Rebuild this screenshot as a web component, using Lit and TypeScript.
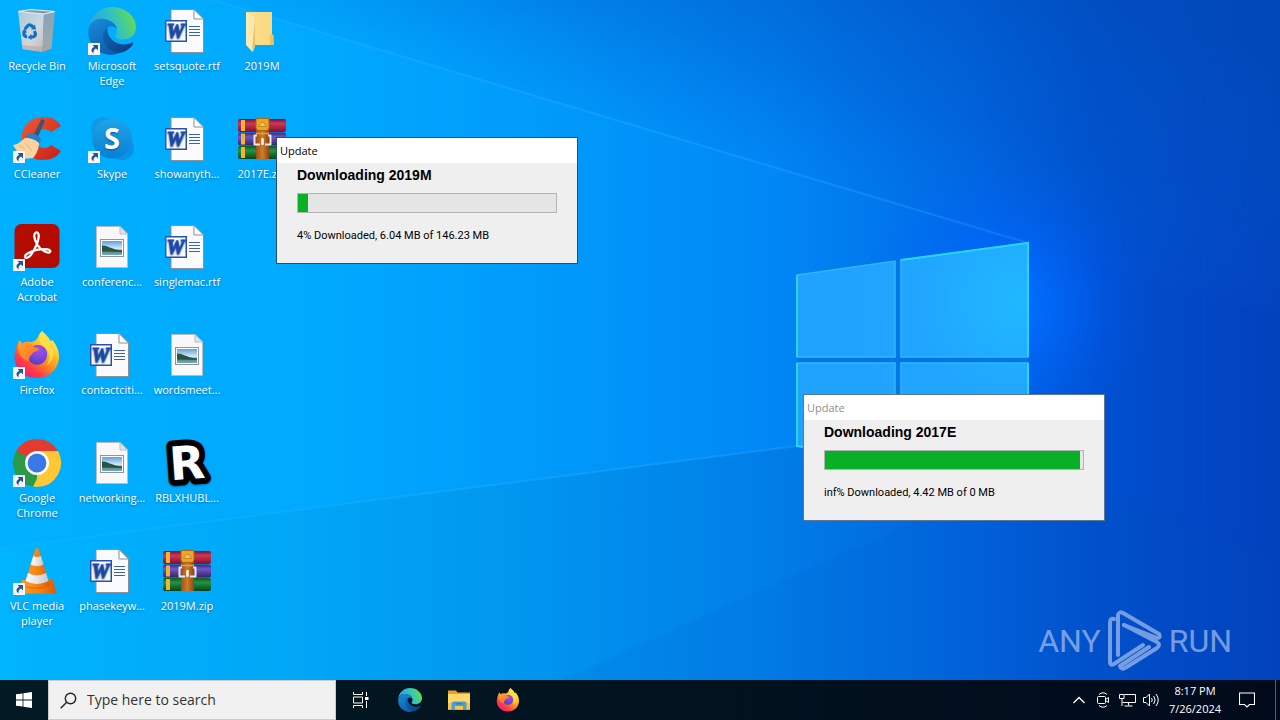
import { LitElement, html, svg, css, nothing } from "lit";
import { customElement, property } from "lit/decorators.js";

type IconName =
  | "bin" | "edge" | "word" | "folder" | "ccleaner" | "skype" | "rar" | "acrobat"
  | "image" | "firefox" | "chrome" | "blox" | "vlc" | "explorer";

interface DesktopItem {
  label: string;
  icon: IconName;
  shortcut?: boolean;
}

const items: DesktopItem[] = [
  { label: "Recycle Bin", icon: "bin" },
  { label: "CCleaner", icon: "ccleaner", shortcut: true },
  { label: "Adobe Acrobat", icon: "acrobat", shortcut: true },
  { label: "Firefox", icon: "firefox", shortcut: true },
  { label: "Google Chrome", icon: "chrome", shortcut: true },
  { label: "VLC media player", icon: "vlc", shortcut: true },
  { label: "Microsoft Edge", icon: "edge", shortcut: true },
  { label: "Skype", icon: "skype", shortcut: true },
  { label: "conferenc...", icon: "image" },
  { label: "contactciti...", icon: "word" },
  { label: "networking...", icon: "image" },
  { label: "phasekeyw...", icon: "word" },
  { label: "setsquote.rtf", icon: "word" },
  { label: "showanyth...", icon: "word" },
  { label: "singlemac.rtf", icon: "word" },
  { label: "wordsmeet...", icon: "image" },
  { label: "RBLXHUBL...", icon: "blox" },
  { label: "2019M.zip", icon: "rar" },
  { label: "2019M", icon: "folder" },
  { label: "2017E.zip", icon: "rar" },
];

const glyphs = {
  bin: svg`
    <defs>
      <linearGradient id="bin-l" x1="0" y1="0" x2="1" y2="1"><stop offset="0" stop-color="#a9c8da"/><stop offset=".6" stop-color="#cfd8de"/><stop offset="1" stop-color="#c4b8b0"/></linearGradient>
      <linearGradient id="bin-r" x1="0" y1="0" x2="0" y2="1"><stop offset="0" stop-color="#86a5b9"/><stop offset="1" stop-color="#a3a9ae"/></linearGradient>
    </defs>
    <path d="M5 4.500 L31 6.500 L29.500 45 L9.500 42 Z" fill="url(#bin-l)"/>
    <path d="M31 6.500 L42 4.500 L38.500 41.500 L29.500 45 Z" fill="url(#bin-r)"/>
    <path d="M5 4.500 L18 2.500 L42 4.500 L31 7 Z" fill="#7f9aab" stroke="#e6eff4" stroke-width="1.200"/>
    <path d="M9 38 L29.800 40 L38.800 37 L38.500 41.500 L29.500 45 L9.500 42 Z" fill="#b89f94" opacity=".5"/>
    <g fill="none" stroke="#1273c4" stroke-width="3.200">
      <path d="M12 22 L15 18.500 Q17 17 19 19 L20.500 21"/>
      <path d="M21.500 24 L22.500 27 Q22 30 19 30 L17 30"/>
      <path d="M14 30 Q10.500 29 11 26 L11.500 24"/>
    </g>
    <path d="M18 22.500 L23 22.500 L22 17.500 Z M18.500 27 L14.500 30.500 L18.500 33 Z M9 25.500 L14 25.500 L11.500 21 Z" fill="#1273c4"/>`,
  edge: svg`
    <defs>
      <linearGradient id="ed-a" x1="0" y1=".6" x2="1" y2=".3"><stop offset="0" stop-color="#2e9fe0"/><stop offset=".5" stop-color="#2fc0c8"/><stop offset="1" stop-color="#69dd49"/></linearGradient>
      <linearGradient id="ed-b" x1="0" y1="0" x2=".6" y2="1"><stop offset="0" stop-color="#178ddb"/><stop offset="1" stop-color="#0d5cad"/></linearGradient>
      <linearGradient id="ed-c" x1="0" y1="0" x2="1" y2=".6"><stop offset="0" stop-color="#1464b4"/><stop offset="1" stop-color="#0b4184"/></linearGradient>
    </defs>
    <path d="M0.500 21 C2 9 12 0 24 0 C38 0 48 10 48 20 C48 28 42 32.500 35 32.500 C30 32.500 27 31 27 29.500 C27 28 29 27.500 29 23.500 C29 17 21 12 13.500 12 C7 12 2.500 15.500 .5 21 Z" fill="url(#ed-a)"/>
    <path d="M.3 25 C.3 16 7 11.800 13.500 11.800 C22 11.800 28 17 29 22 C27 19.500 23.500 18.500 20.500 20 C15 23 15 31 19 37 C24 43 31 44 37 41.500 C32.500 46.500 27 48 21.500 47.800 C9 47 .3 37 .3 25 Z" fill="url(#ed-b)"/>
    <path d="M19.500 20.500 C14.500 24 13.500 31 17.500 38 C22 45 31 48.500 38.500 43.500 C42 41.500 44.500 38.500 45.300 36.500 C45.500 35.500 44.700 35.200 44 35.600 C38.500 38.500 30.500 38 25.500 34 C20.500 30 19 25 19.500 20.500 Z" fill="url(#ed-c)"/>`,
  word: svg`
    <path d="M8 2.500 H31 L40.500 12 V45.500 H8 Z" fill="#fbfbfd" stroke="#8d8f9a"/>
    <path d="M31 2.500 V12 H40.500 Z" fill="#fff" stroke="#8d8f9a"/>
    <path d="M26 19.500 H37 M26 22.500 H37 M26 25.500 H37 M26 28.500 H37" stroke="#3764b4" stroke-width="1.200"/>
    <rect x="2" y="13" width="22" height="22" fill="#2454b0"/>
    <rect x="3.500" y="14.500" width="19" height="19" fill="#fafbff"/>
    <text x="12.500" y="31" text-anchor="middle" font-family="Liberation Serif, serif" font-weight="700" font-style="italic" font-size="20" fill="#1f4fac" stroke="#1f4fac">W</text>`,
  image: svg`
    <defs><linearGradient id="im-s" x1="0" y1="0" x2="0" y2="1"><stop offset="0" stop-color="#5f9fe0"/><stop offset=".55" stop-color="#d6ebf5"/><stop offset=".7" stop-color="#4d8189"/><stop offset="1" stop-color="#7ba9c2"/></linearGradient></defs>
    <path d="M8.500 3.500 H32 L39.500 11 V44.500 H8.500 Z" fill="#f8f8f9" stroke="#b6bcc2"/>
    <path d="M32 3.500 V11 H39.500 Z" fill="#dde6ed" stroke="#b6bcc2"/>
    <rect x="12.500" y="16.500" width="23" height="17" fill="#fff" stroke="#8b96a1"/>
    <rect x="14" y="18" width="20" height="14" fill="url(#im-s)"/>
    <path d="M14 22.500 C19 22 22 26 34 27.500 V29 L14 28.500 Z" fill="#295540"/>`,
  folder: svg`
    <defs><linearGradient id="fo-a" x1="0" y1="0" x2="1" y2="0"><stop offset="0" stop-color="#f7df93"/><stop offset="1" stop-color="#fbd97c"/></linearGradient></defs>
    <path d="M8 5 H34 V27 L35.500 29 V38 H14 Z" fill="url(#fo-a)"/>
    <path d="M34 27 L35.500 29 V38 H32 V29 Z" fill="#ebc463"/>
    <path d="M8 5 L17 10.500 V39.500 L14.500 45 L8 38 Z" fill="#fce9ad"/>
    <path d="M17 10.500 V39.500 L14.500 45 V38 Z" fill="#e6c46c"/>`,
  ccleaner: svg`
    <defs><linearGradient id="cc-a" x1="0" y1="0" x2="1" y2="1"><stop offset="0" stop-color="#f05a38"/><stop offset="1" stop-color="#c71f16"/></linearGradient></defs>
    <path d="M48 11 C44 4 37 1.500 29 2 C16 3 8 12 9 25 C10 38 19 45.500 30 45 C38 45 44 42 48 36 L38 30 C35 33.500 29 34 26 31 C22 27 22 19 26 16 C30 13 35 14 38 17 Z" fill="url(#cc-a)"/>
    <path d="M28.500 4 L32 5.500 L24 24 L20 21 Z" fill="#3a5574"/>
    <path d="M14 20 C18 17 25 19 28 24 L26 29 C21 26 17 24.500 12 24.500 Z" fill="#2f7fc0"/>
    <path d="M0 30 C6 29 8 26 12 23 C18 23 23 25 26 28 C26 34 23 40 20 43 L9 44 Z" fill="#f9d3a0"/>
    <path d="M6 30 L12 34 M12 28 L19 36" stroke="#e6b176" stroke-width="1"/>`,
  skype: svg`
    <defs><linearGradient id="sk-a" x1="0" y1="0" x2="0" y2="1"><stop offset="0" stop-color="#1ea4e8"/><stop offset="1" stop-color="#0a7fd4"/></linearGradient></defs>
    <circle cx="15" cy="14" r="12" fill="#1098e6"/><circle cx="34" cy="33" r="12" fill="#0b90e8"/>
    <circle cx="24" cy="23.500" r="20" fill="url(#sk-a)"/>
    <text x="24" y="33.500" text-anchor="middle" font-family="Open Sans, sans-serif" font-weight="700" font-size="29" fill="#fff">S</text>`,
  rar: svg`
    <defs>
      <linearGradient id="ra-1" x1="0" y1="0" x2="0" y2="1"><stop offset="0" stop-color="#74152e"/><stop offset=".35" stop-color="#d23552"/><stop offset="1" stop-color="#7a1230"/></linearGradient>
      <linearGradient id="ra-2" x1="0" y1="0" x2="0" y2="1"><stop offset="0" stop-color="#3b277c"/><stop offset=".35" stop-color="#7157c4"/><stop offset="1" stop-color="#33226c"/></linearGradient>
      <linearGradient id="ra-3" x1="0" y1="0" x2="0" y2="1"><stop offset="0" stop-color="#0d5a26"/><stop offset=".35" stop-color="#239444"/><stop offset="1" stop-color="#0a431b"/></linearGradient>
      <linearGradient id="ra-4" x1="0" y1="0" x2="1" y2="0"><stop offset="0" stop-color="#9d5117"/><stop offset=".5" stop-color="#cf7c2a"/><stop offset="1" stop-color="#8d4512"/></linearGradient>
    </defs>
    <rect x="0" y="4" width="48" height="13" rx="2" fill="url(#ra-1)"/>
    <rect x="0" y="17.500" width="48" height="13" rx="2" fill="url(#ra-2)"/>
    <rect x="0" y="31" width="48" height="13" rx="2" fill="url(#ra-3)"/>
    <path d="M3 5 H7 V16 H3 Z M3 18.500 H7 V29.500 H3 Z M3 32 H7 V43 H3 Z" fill="#f0b434"/>
    <rect x="18" y="3" width="13" height="41" fill="url(#ra-4)"/>
    <path d="M18 3.500 H31 V12.500 Q31 15.500 28 15.500 H21 Q18 15.500 18 12.500 Z" fill="#e9a62c" stroke="#a9660f"/>
    <path d="M20.500 11.500 Q24.500 3 28.500 11.500 Z" fill="#f6c64e" stroke="#b9771a" stroke-width=".8"/>
    <path d="M19 20.500 H16.500 V29.500 H22 M30 20.500 H32.500 V29.500 H27" fill="none" stroke="#eceaf0" stroke-width="2" stroke-linejoin="round"/>
    <rect x="23.200" y="23" width="2.600" height="7" rx="1" fill="#f7f3ee"/>
    <path d="M18 18.500 H31" stroke="#e9a62c" stroke-width="1.500"/>`,
  acrobat: svg`
    <rect x="1.500" y="1" width="45" height="44" rx="7" fill="#b30b00"/>
    <path d="M23 9.500 C26 8.500 27 14 23.500 22 C20 30.500 15 36.500 12.500 34.500 C10 32 17.500 28 25 26.700 C33 25.400 38.500 26.500 37 29 C35 31 28 27.500 24.500 22 C20.500 15.500 20.500 10.500 23 9.500 Z" fill="none" stroke="#fff" stroke-width="2.300" stroke-linejoin="round"/>`,
  firefox: svg`
    <defs>
      <linearGradient id="ff-a" x1=".85" y1=".1" x2=".2" y2=".95"><stop offset="0" stop-color="#fff25a"/><stop offset=".28" stop-color="#ffc52e"/><stop offset=".52" stop-color="#ff8a20"/><stop offset=".76" stop-color="#ff4145"/><stop offset="1" stop-color="#ec1a78"/></linearGradient>
      <radialGradient id="ff-b" cx=".6" cy=".25" r=".85"><stop offset="0" stop-color="#a64bf2"/><stop offset=".6" stop-color="#7246d6"/><stop offset="1" stop-color="#4a3cb6"/></radialGradient>
      <linearGradient id="ff-c" x1="0" y1="0" x2="1" y2="1"><stop offset="0" stop-color="#ffa92b"/><stop offset="1" stop-color="#ff6a2c"/></linearGradient>
    </defs>
    <path d="M29 0 C32 3 36 6 37.500 10 C39 10.500 39 9 38.500 8 C43 13 46 19 46 25.500 C46 38 36 47 24 47 C11 47 1.500 38 1.500 26 C1.500 18 5 12 6.500 9 C7.500 10.500 8.500 11.500 9 12.500 C12 10.500 15.500 10.500 18.500 11 C22 10.500 24 8.500 25 6 C26 3 27.500 1.500 29 0 Z" fill="url(#ff-a)"/>
    <path d="M25 14 C31 14 35 19 34 25 C33 31 28 34.500 22.500 33.500 C16.500 32.500 13.500 27.500 15 22 C16 17 20 14 25 14 Z" fill="url(#ff-b)"/>
    <path d="M6.500 9 C8 11.500 9 12 9.500 12.500 C13 10 18 12 21.500 16 L26 17.500 C25.500 20.500 21.500 20.500 20.500 21.500 C19 23.500 15 25.500 16.500 30 C10 30 4 23 5 14 Z" fill="url(#ff-c)"/>
    <path d="M29 0 C31 8 39 11 40 21 C40.500 28 37 33 33 35 C39 27 36 18 30 15 C26 12 25.500 5 29 0 Z" fill="#ffe14a" opacity=".75"/>`,
  chrome: svg`
    <path d="M24 24 L3.200 12 A24 24 0 0 1 44.800 12 Z" fill="#e33b2e"/>
    <path d="M24 24 L44.800 12 A24 24 0 0 1 24 48 Z" fill="#fcc934"/>
    <path d="M24 24 L24 48 A24 24 0 0 1 3.200 12 Z" fill="#2a9a48"/>
    <path d="M24 12 H44.800 A24 24 0 0 1 46 15 L34 24 Z" fill="#fcc934"/>
    <path d="M34.400 30 L24 48 L20 47.600 L27 34 Z" fill="#fcc934"/>
    <path d="M3.200 12 L13.600 30 L20 34 L14 20 Z" fill="#2a9a48"/>
    <circle cx="24" cy="24" r="12" fill="#fff"/><circle cx="24" cy="24" r="9.400" fill="#3b78e7"/>`,
  blox: svg`
    <text x="24" y="40" text-anchor="middle" transform="rotate(-4 24 24)" font-family="DejaVu Sans, sans-serif" font-weight="700" font-size="46" fill="#fff" stroke="#000" stroke-width="12" stroke-linejoin="round" paint-order="stroke">R</text>`,
  vlc: svg`
    <defs><linearGradient id="vl-a" x1="0" y1="0" x2="1" y2="0"><stop offset="0" stop-color="#ff9a24"/><stop offset=".5" stop-color="#f98413"/><stop offset="1" stop-color="#d95c04"/></linearGradient>
    <linearGradient id="vl-b" x1="0" y1="0" x2="1" y2="0"><stop offset="0" stop-color="#fff"/><stop offset="1" stop-color="#c9c9cd"/></linearGradient></defs>
    <path d="M9 33 H40 L43.500 46.500 H7 Z" fill="url(#vl-a)"/>
    <path d="M11 38 C14 43 34 43 37 38 L35 33 H13 Z" fill="#cf5a06" opacity=".7"/>
    <path d="M22.300 2 Q24 0 25.700 2 L36.500 38 C34 41.500 14 41.500 11.500 38 Z" fill="url(#vl-a)"/>
    <path d="M20.200 9 Q24 11 27.800 9 L30.500 17.500 Q24 20.500 17.600 17.500 Z" fill="url(#vl-b)"/>
    <path d="M15 26 Q24 30.500 33 26 L35.500 34 Q24 40 12.500 34 Z" fill="url(#vl-b)"/>`,
  explorer: svg`
    <path d="M2 5 H18 L21 9 H46 V43 H2 Z" fill="#e8a024"/>
    <path d="M2 12 H46 V43 H2 Z" fill="#ffd765"/>
    <path d="M2 30 H46 V43 H2 Z" fill="#fbc540"/>
    <path d="M9 44 V31 Q9 27 13 27 H35 Q39 27 39 31 V44 H32 V36 H16 V44 Z" fill="#4b9ddb"/>
    <path d="M17 30 H31 V33 H17 Z" fill="#2f7fbf"/>`,
};

@customElement("app-icon")
export class AppIcon extends LitElement {
  @property() name: IconName = "word";
  @property({ type: Boolean }) shortcut = false;

  static styles = css`
    :host { display: block; width: 48px; height: 48px; }
    .art { display: block; width: 100%; height: 100%; overflow: visible; }
  `;

  render() {
    return html`<svg class="art" viewBox="0 0 48 48" aria-hidden="true">
      ${glyphs[this.name]}
      ${this.shortcut
        ? svg`<rect x="0" y="36" width="12" height="12" fill="#f5f8fb"/>
          <path d="M4.500 38 H10 V43.500 L8 41.600 Q5 43 5.500 46.500 Q1 43 6.200 39.800 Z" fill="#26549b"/>`
        : nothing}
    </svg>`;
  }
}

@customElement("update-window")
export class UpdateWindow extends LitElement {
  @property() heading = "";
  @property() status = "";
  @property({ type: Number }) value = 0;
  @property({ type: Boolean, reflect: true }) inactive = false;

  static styles = css`
    :host {
      display: block;
      box-sizing: border-box;
      width: 302px;
      border: 1px solid #24506f;
      background: #efefef;
      color: #000;
    }
    :host([inactive]) { border-color: #5c7796; }
    .title {
      background: #fff;
      padding: 0 3px;
      font: 11px/25px "Open Sans", "Noto Sans", sans-serif;
    }
    :host([inactive]) .title { color: #8f8f8f; }
    .body { display: flex; flex-direction: column; padding: 4px 20px 19px; }
    .heading { margin: 0; font: 700 14px/16px "Liberation Sans", Arial, sans-serif; }
    .bar {
      appearance: none;
      display: block;
      box-sizing: border-box;
      width: 100%;
      height: 20px;
      margin: 10px 0 15px;
      border: 1px solid #b3b3b3;
      background: #e5e5e5;
    }
    .bar::-webkit-progress-bar { background: #e5e5e5; }
    .bar::-webkit-progress-value { background: #08b028; }
    .status { margin: 0; font: 11px/16px "Roboto", Arial, sans-serif; }
  `;

  render() {
    return html`
      <div class="title">Update</div>
      <div class="body">
        <h2 class="heading">${this.heading}</h2>
        <progress class="bar" max="100" .value=${this.value} aria-label=${this.heading}></progress>
        <p class="status">${this.status}</p>
      </div>`;
  }
}

@customElement("app-root")
export class AppRoot extends LitElement {
  static styles = css`
    :host {
      display: flex;
      flex-direction: column;
      height: 100vh;
      min-height: 720px;
      font-family: "Open Sans", "Noto Sans", sans-serif;
    }
    .desktop { position: relative; flex: 1; overflow: hidden; background: #0090f4; }
    .wallpaper { position: absolute; inset: 0; width: 100%; height: 100%; }
    .icons {
      position: relative;
      display: grid;
      grid-auto-flow: column;
      grid-template-rows: repeat(6, 108px);
      grid-auto-columns: 74px;
      column-gap: 1px;
    }
    .item {
      display: flex;
      flex-direction: column;
      align-items: center;
      gap: 3px;
      padding: 7px 4px 0;
      border: 0;
      background: none;
      color: #fff;
      font: 11px/15px "Open Sans", "Noto Sans", sans-serif;
      text-shadow: 0 1px 2px rgb(0 40 90 / 0.5);
    }
    .win { position: absolute; }
    .win.first { left: 276px; top: 137px; }
    .win.second { left: 803px; top: 394px; }
    .watermark {
      position: absolute;
      right: 48px;
      bottom: 8px;
      display: flex;
      align-items: center;
      gap: 6px;
      color: #c4d2f2;
      opacity: 0.6;
      font: 32px/62px "Roboto", sans-serif;
    }
    .mark { width: 56px; height: 62px; }
    .taskbar { display: flex; height: 40px; background: linear-gradient(90deg, #021a24, #02131f 50%, #010a1b); color: #fff; }
    .tile {
      display: flex;
      align-items: center;
      justify-content: center;
      width: 49px;
      padding: 0;
      border: 0;
      background: none;
      color: inherit;
    }
    .tile.narrow { width: 24px; }
    .tile.start { width: 48px; }
    .small { width: 24px; height: 24px; }
    .search {
      display: flex;
      align-items: center;
      gap: 10px;
      box-sizing: border-box;
      width: 288px;
      padding: 0 11px;
      border: 1px solid #c9cccd;
      background: #f1f1f1;
      color: #222;
    }
    .query {
      flex: 1;
      min-width: 0;
      padding: 0;
      border: 0;
      outline: 0;
      background: none;
      font: 14px/20px "Open Sans", "Noto Sans", sans-serif;
    }
    .query::placeholder { color: #333; opacity: 1; }
    .apps { display: flex; flex: 1; }
    .tray { display: flex; }
    .clock {
      display: flex;
      flex-direction: column;
      justify-content: center;
      width: 64px;
      font-size: 11px;
      line-height: 18px;
      text-align: center;
    }
    .notify { width: 40px; }
    .peek { width: 5px; margin-left: 8px; padding: 0; border: 0; border-left: 1px solid #56606c; background: none; }
  `;

  private wallpaper() {
    return html`<svg class="wallpaper" viewBox="0 0 1280 680" preserveAspectRatio="xMidYMid slice" aria-hidden="true">
      <defs>
        <linearGradient id="base" x1="0" y1="0" x2="1" y2="0">
          <stop offset="0" stop-color="#00b0ff"/><stop offset=".25" stop-color="#00a9fe"/><stop offset=".45" stop-color="#0098fa"/>
          <stop offset=".6" stop-color="#0088f6"/><stop offset=".76" stop-color="#006ae6"/><stop offset=".86" stop-color="#0050d0"/><stop offset="1" stop-color="#0340bc"/>
        </linearGradient>
        <linearGradient id="shade" gradientUnits="userSpaceOnUse" x1="690" y1="-130" x2="614" y2="124">
          <stop offset="0" stop-color="#004cb8" stop-opacity=".65"/><stop offset=".6" stop-color="#0054c4" stop-opacity=".35"/><stop offset="1" stop-color="#0060d8" stop-opacity=".04"/>
        </linearGradient>
        <linearGradient id="floor" x1="0" y1="0" x2="1" y2="0">
          <stop offset="0" stop-color="#00b8ff" stop-opacity=".5"/><stop offset=".4" stop-color="#0092e4" stop-opacity=".5"/><stop offset=".75" stop-color="#0058cc" stop-opacity=".4"/><stop offset="1" stop-color="#0340bc" stop-opacity=".3"/>
        </linearGradient>
        <radialGradient id="glow"><stop offset="0" stop-color="#0078ff" stop-opacity="1"/><stop offset=".4" stop-color="#0068ff" stop-opacity=".6"/><stop offset=".7" stop-color="#0060ff" stop-opacity=".2"/><stop offset="1" stop-color="#0060ff" stop-opacity="0"/></radialGradient>
        <linearGradient id="ray" gradientUnits="userSpaceOnUse" x1="0" y1="0" x2="1028" y2="0"><stop offset="0" stop-color="#40c0ff" stop-opacity=".1"/><stop offset=".6" stop-color="#30b0ff" stop-opacity=".35"/><stop offset="1" stop-color="#20a0ff" stop-opacity=".35"/></linearGradient>
        <radialGradient id="pane" gradientUnits="userSpaceOnUse" cx="1020" cy="300" r="200"><stop offset="0" stop-color="#20b8ff"/><stop offset=".5" stop-color="#20a6ff"/><stop offset="1" stop-color="#20a2ff"/></radialGradient>
      </defs>
      <rect width="1280" height="680" fill="url(#base)"/>
      <path d="M200 -4 H1280 V318 L1028 243 Z" fill="url(#shade)"/>
      <path d="M0 548 L797 446 L1028 476 L1280 540 V680 H0 Z" fill="url(#floor)"/>
      <ellipse cx="1005" cy="305" rx="150" ry="150" fill="url(#glow)"/>
      <path d="M200 -4 L1028 243" stroke="url(#ray)" stroke-width="2"/>
      <path d="M0 548 L797 446" stroke="url(#ray)" stroke-width="2"/>
      <path d="M560 680 L930 515 L1028 476 L1280 560 V680 Z" fill="#0058c8" opacity=".1"/>
      <path d="M797 275 L1028 243 V476 L797 446 Z" fill="#0078e4"/>
      <g fill="url(#pane)" stroke="#35b4ff" stroke-width="1.500">
        <path d="M797 275 L895 261 V357 H797 Z"/>
        <path d="M901 260 L1028 243 V357 H901 Z"/>
        <path d="M797 363 H895 V459 L797 446 Z"/>
        <path d="M901 363 H1028 V476 L901 460 Z"/>
      </g>
      <path d="M797 357 V275 M797 363 V446 L895 459 M901 260 L1028 243 V357 M1028 363 V476" fill="none" stroke="#2ad4ff" stroke-width="2"/>
    </svg>`;
  }

  render() {
    return html`
      <main class="desktop">
        ${this.wallpaper()}
        <div class="icons">
          ${items.map((i) => html`<button class="item"><app-icon name=${i.icon} ?shortcut=${i.shortcut}></app-icon><span>${i.label}</span></button>`)}
        </div>
        <update-window class="win first" heading="Downloading 2019M" status="4% Downloaded, 6.04 MB of 146.23 MB" .value=${4}></update-window>
        <update-window class="win second" inactive heading="Downloading 2017E" status="inf% Downloaded, 4.42 MB of 0 MB" .value=${99}></update-window>
        <div class="watermark">
          <span>ANY</span>
          <svg class="mark" viewBox="0 0 56 62" fill="none" stroke="currentColor" stroke-width="4" stroke-linejoin="round" stroke-linecap="round" aria-hidden="true">
            <path d="M7 9 Q3 8 3 13 V52 Q3 56 7 54 L36 35"/>
            <path d="M11 45 V5 Q12 1 16 3 L52 24 Q54 28 50 28 L17 15"/>
            <path d="M17 15 L50 32 Q54 35 50 38 L18 58 Q14 60 13 56 L42 37"/>
          </svg>
          <span>RUN</span>
        </div>
      </main>
      <footer class="taskbar">
        <button class="tile start" aria-label="Start">
          <svg width="16" height="16" viewBox="0 0 16 16" fill="#fff"><path d="M0 2.300 L6.600 1.400 V7.600 H0 Z M7.400 1.300 L16 0 V7.600 H7.400 Z M0 8.400 H6.600 V14.600 L0 13.700 Z M7.400 8.400 H16 V16 L7.400 14.700 Z"/></svg>
        </button>
        <label class="search">
          <svg width="17" height="17" viewBox="0 0 17 17" fill="none" stroke="#222" stroke-width="1.400"><circle cx="10.500" cy="6.500" r="5.200"/><path d="M6.700 10.300 L.7 16.300"/></svg>
          <input class="query" type="text" placeholder="Type here to search" aria-label="Type here to search" />
        </label>
        <nav class="apps">
          <button class="tile" aria-label="Task View">
            <svg width="17" height="16" viewBox="0 0 17 16" fill="none" stroke="#fff"><path d="M1.500 0 V2.500 H10.500 V0 M1.500 16 V13.500 H10.500 V16 M1.500 5 H10.500 V11 H1.500 Z M14.500 0 V4 M14.500 9 V16"/><path d="M13 5 H16.500 V8 H13 Z" fill="#fff" stroke="none"/></svg>
          </button>
          <button class="tile" aria-label="Microsoft Edge"><app-icon class="small" name="edge"></app-icon></button>
          <button class="tile" aria-label="File Explorer"><app-icon class="small" name="explorer"></app-icon></button>
          <button class="tile" aria-label="Firefox"><app-icon class="small" name="firefox"></app-icon></button>
        </nav>
        <div class="tray">
          <button class="tile narrow" aria-label="Show hidden icons"><svg width="12" height="8" viewBox="0 0 12 8" fill="none" stroke="#fff" stroke-width="1.300"><path d="M.5 7 L6 1.500 L11.500 7"/></svg></button>
          <button class="tile narrow" aria-label="Camera"><svg width="12" height="16" viewBox="0 0 12 16" fill="none" stroke="#fff"><path d="M2 2.500 Q6 -1 10 2.500 M2 13.500 Q6 17 10 13.500"/><rect x=".5" y="4.500" width="8" height="7" rx="1"/><path d="M8.500 7.500 L11.500 5.500 V10.500 L8.500 8.500"/></svg></button>
          <button class="tile narrow" aria-label="Network"><svg width="17" height="14" viewBox="0 0 17 14" fill="none" stroke="#fff"><path d="M5.500 1.500 H16.500 V9.500 H3.500 M9.500 9.500 V12.500 M5.500 13 H13.500 M.5 1.500 H5 V5.500 H.5 Z M3 5.500 V13"/></svg></button>
          <button class="tile narrow" aria-label="Volume"><svg width="17" height="14" viewBox="0 0 17 14" fill="none" stroke="#fff"><path d="M.5 4.500 H3 L6.500 1 V13 L3 9.500 H.5 Z M8.500 5 Q10 7 8.500 9 M10.700 3 Q13.500 7 10.700 11 M13 1 Q17.500 7 13 13"/></svg></button>
          <div class="clock"><span>8:17 PM</span><span>7/26/2024</span></div>
          <button class="tile notify" aria-label="Notifications"><svg width="16" height="16" viewBox="0 0 16 16" fill="none" stroke="#fff" stroke-width="1.100"><path d="M.5 1 H15.500 V12.500 H10.500 L8 15 L5.500 12.500 H.5 Z"/></svg></button>
          <button class="peek" aria-label="Show desktop"></button>
        </div>
      </footer>`;
  }
}
